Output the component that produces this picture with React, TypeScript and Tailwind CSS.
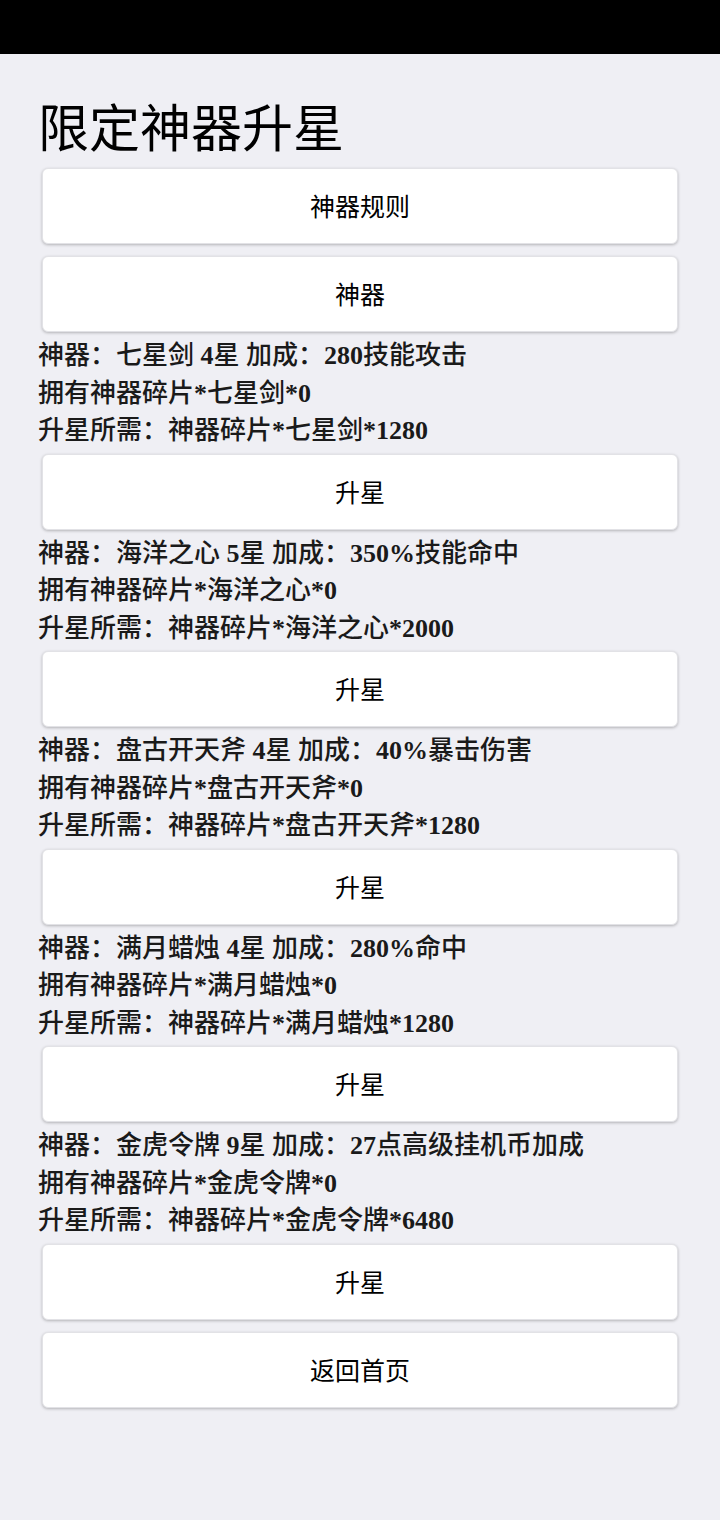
const items = [
  { name: '七星剑', star: '4', bonus: '280技能攻击', need: '1280' },
  { name: '海洋之心', star: '5', bonus: '350%技能命中', need: '2000' },
  { name: '盘古开天斧', star: '4', bonus: '40%暴击伤害', need: '1280' },
  { name: '满月蜡烛', star: '4', bonus: '280%命中', need: '1280' },
  { name: '金虎令牌', star: '9', bonus: '27点高级挂机币加成', need: '6480' },
]

// latin runs are bold serif, chinese runs medium sans
function Mixed({ text }: { text: string }) {
  const parts = text.match(/[\x20-\x7e]+|[^\x20-\x7e]+/g) ?? []
  return (
    <div>
      {parts.map((p, i) =>
        /^[\x20-\x7e]+$/.test(p) ? (
          <span key={i} className="font-bold">
            {p}
          </span>
        ) : (
          <span key={i}>{p}</span>
        ),
      )}
    </div>
  )
}

function Btn({ children }: { children: React.ReactNode }) {
  return (
    <div className="px-1">
      <button
        type="button"
        className="flex h-[76px] w-full items-center justify-center rounded-md border border-[#e2e2e6] bg-white text-[25px] text-black shadow-[0_1px_3px_rgba(0,0,0,0.25)]"
        style={{ fontFamily: '"Noto Sans CJK SC", sans-serif' }}
      >
        {children}
      </button>
    </div>
  )
}

export default function App() {
  return (
    <div
      className="min-h-[1520px] bg-[#efeff4]"
      style={{ fontFamily: '"Liberation Serif", "Noto Sans CJK SC", serif' }}
    >
      <div className="h-[54px] bg-black" />
      <div className="px-[38px] pt-[40px]">
        <h1
          className="mb-[12px] text-[51px] leading-[62px] text-black"
          style={{ fontFamily: '"Noto Sans CJK SC", sans-serif' }}
        >
          限定神器升星
        </h1>
        <div className="flex flex-col gap-3">
          <Btn>神器规则</Btn>
          <Btn>神器</Btn>
        </div>
        {items.map((it) => (
          <div key={it.name}>
            <div className="pt-[5px] pb-[4px] text-[26px] leading-[37.5px] font-medium text-[#1a1a1a]">
              <Mixed text={`神器：${it.name} ${it.star}星 加成：${it.bonus}`} />
              <Mixed text={`拥有神器碎片*${it.name}*0`} />
              <Mixed text={`升星所需：神器碎片*${it.name}*${it.need}`} />
            </div>
            <Btn>升星</Btn>
          </div>
        ))}
        <div className="mt-3">
          <Btn>返回首页</Btn>
        </div>
      </div>
    </div>
  )
}
